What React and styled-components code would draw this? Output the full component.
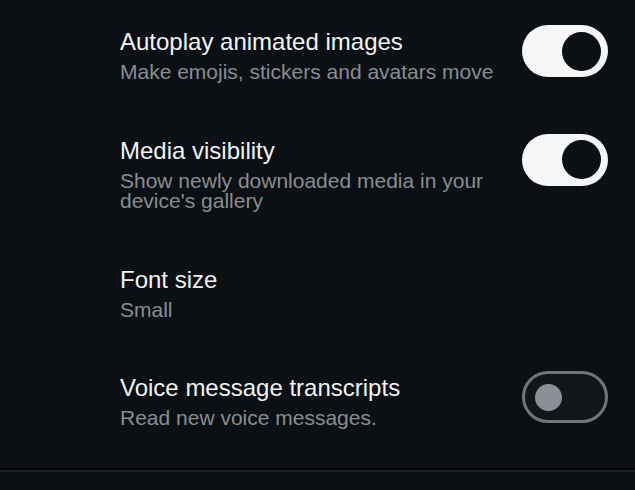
import React, { useState } from "react";
import styled, { createGlobalStyle } from "styled-components";

const GlobalStyle = createGlobalStyle`
  html, body {
    margin: 0;
    padding: 0;
    background: #0b1014;
  }
  body {
    font-family: "Liberation Sans", Arial, sans-serif;
  }
`;

const settings = [
  {
    id: "autoplay",
    title: "Autoplay animated images",
    subtitle: "Make emojis, stickers and avatars move",
    toggle: true,
    on: true,
  },
  {
    id: "media",
    title: "Media visibility",
    subtitle: "Show newly downloaded media in your device's gallery",
    toggle: true,
    on: true,
  },
  {
    id: "font",
    title: "Font size",
    subtitle: "Small",
    toggle: false,
  },
  {
    id: "voice",
    title: "Voice message transcripts",
    subtitle: "Read new voice messages.",
    toggle: true,
    on: false,
  },
];

export default function App() {
  const [values, setValues] = useState(() =>
    Object.fromEntries(settings.map((s) => [s.id, !!s.on]))
  );

  function flip(id) {
    setValues((v) => ({ ...v, [id]: !v[id] }));
  }

  return (
    <Page>
      <GlobalStyle />
      <List>
        {settings.map((s) => (
          <Row key={s.id}>
            <Text>
              <Title>{s.title}</Title>
              <Subtitle>{s.subtitle}</Subtitle>
            </Text>
            {s.toggle && (
              <Switch
                type="button"
                role="switch"
                aria-checked={values[s.id]}
                $on={values[s.id]}
                onClick={() => flip(s.id)}
              >
                <Knob $on={values[s.id]} />
              </Switch>
            )}
          </Row>
        ))}
      </List>
      <Divider />
    </Page>
  );
}

const Page = styled.div`
  width: 100%;
  min-height: 490px;
  box-sizing: border-box;
  padding-top: 25px;
  display: flex;
  flex-direction: column;
  background: #0b1014;
`;

const List = styled.div`
  display: flex;
  flex-direction: column;
  gap: 51px;
  padding: 0 27px 0 120px;
`;

const Row = styled.div`
  display: flex;
  justify-content: space-between;
  align-items: flex-start;
`;

const Text = styled.div`
  display: flex;
  flex-direction: column;
  width: 385px;
  padding-top: 2px;
`;

const Title = styled.div`
  font-size: 24px;
  line-height: 30px;
  color: #f2f3f3;
  margin-bottom: 5px;
`;

const Subtitle = styled.div`
  font-size: 21px;
  line-height: 20.5px;
  color: #898d91;
`;

const Switch = styled.button`
  flex-shrink: 0;
  width: 86px;
  height: 52px;
  box-sizing: border-box;
  border-radius: 26px;
  margin: 0;
  cursor: pointer;
  display: flex;
  align-items: center;
  justify-content: ${(p) => (p.$on ? "flex-end" : "flex-start")};
  background: ${(p) => (p.$on ? "#f6f6f6" : "#11161a")};
  border: ${(p) => (p.$on ? "none" : "3px solid #70767b")};
  padding: ${(p) => (p.$on ? "0 7px" : "0 10px")};
`;

const Knob = styled.span`
  display: block;
  width: ${(p) => (p.$on ? "39px" : "27px")};
  height: ${(p) => (p.$on ? "39px" : "27px")};
  border-radius: 50%;
  background: ${(p) => (p.$on ? "#0b1014" : "#8a9096")};
`;

const Divider = styled.div`
  margin-top: 41px;
  height: 2px;
  background: #1b2026;
  box-shadow: 0 -2px 0 #06090c;
`;
